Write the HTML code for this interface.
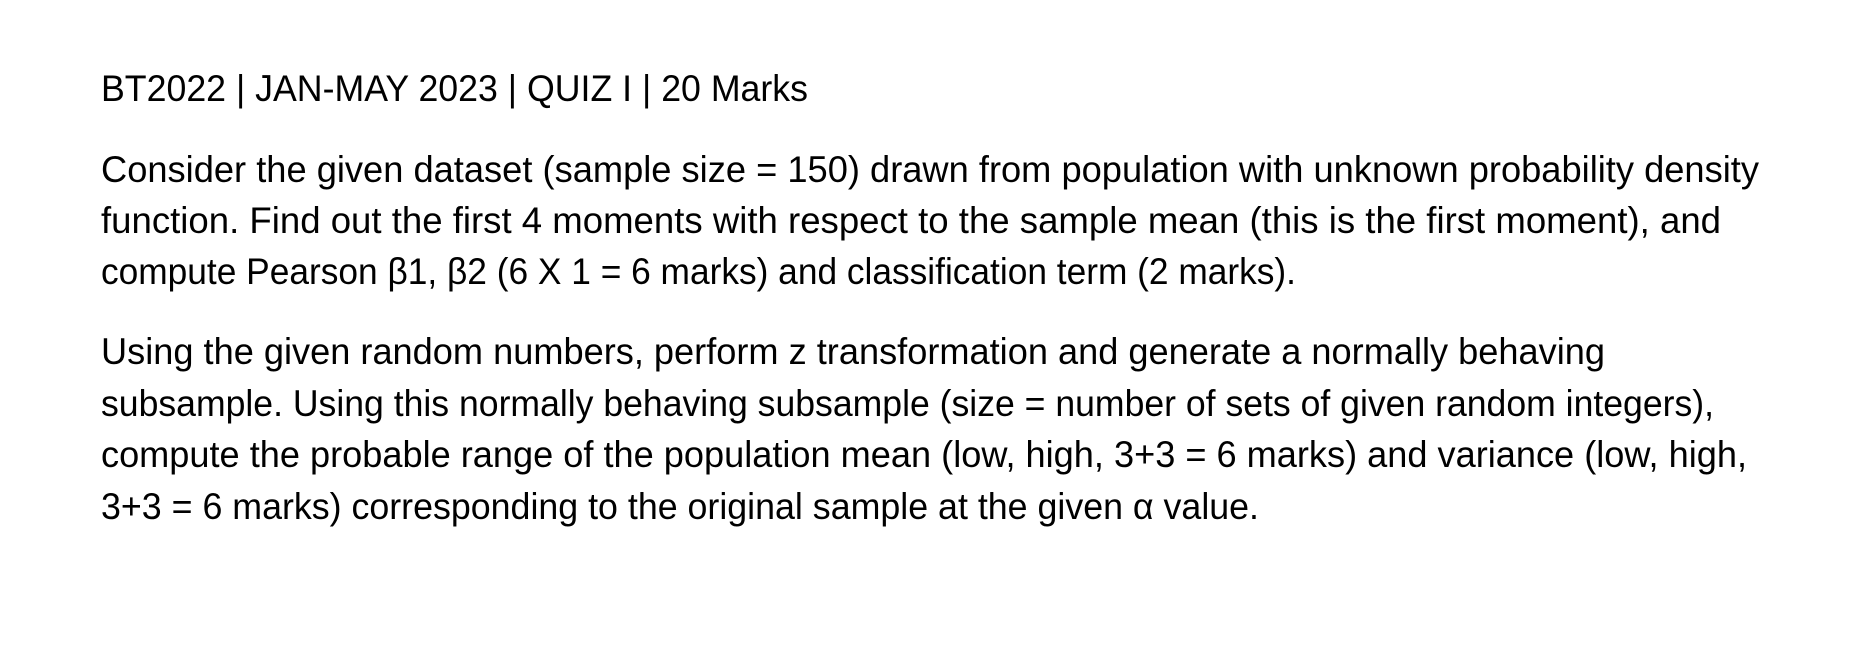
<!DOCTYPE html>
<html><head><meta charset="utf-8"><style>
html,body{margin:0;padding:0;background:#fff;}
svg{display:block;}
text{font-family:"Liberation Sans",sans-serif;font-size:37px;fill:#000;}
</style></head><body>
<svg width="1854" height="658" xmlns="http://www.w3.org/2000/svg">
<text x="101" y="101" textLength="707" lengthAdjust="spacingAndGlyphs">BT2022 | JAN-MAY 2023 | QUIZ I | 20 Marks</text>
<text x="101" y="182" textLength="1658" lengthAdjust="spacingAndGlyphs">Consider the given dataset (sample size = 150) drawn from population with unknown probability density</text>
<text x="101" y="233" textLength="1620" lengthAdjust="spacingAndGlyphs">function. Find out the first 4 moments with respect to the sample mean (this is the first moment), and</text>
<text x="101" y="284" textLength="1195" lengthAdjust="spacingAndGlyphs">compute Pearson β1, β2 (6 X 1 = 6 marks) and classification term (2 marks).</text>
<text x="101" y="364" textLength="1504" lengthAdjust="spacingAndGlyphs">Using the given random numbers, perform z transformation and generate a normally behaving</text>
<text x="101" y="416" textLength="1613" lengthAdjust="spacingAndGlyphs">subsample. Using this normally behaving subsample (size = number of sets of given random integers),</text>
<text x="101" y="467" textLength="1646" lengthAdjust="spacingAndGlyphs">compute the probable range of the population mean (low, high, 3+3 = 6 marks) and variance (low, high,</text>
<text x="101" y="519" textLength="1158" lengthAdjust="spacingAndGlyphs">3+3 = 6 marks) corresponding to the original sample at the given α value.</text>
</svg>
</body></html>
